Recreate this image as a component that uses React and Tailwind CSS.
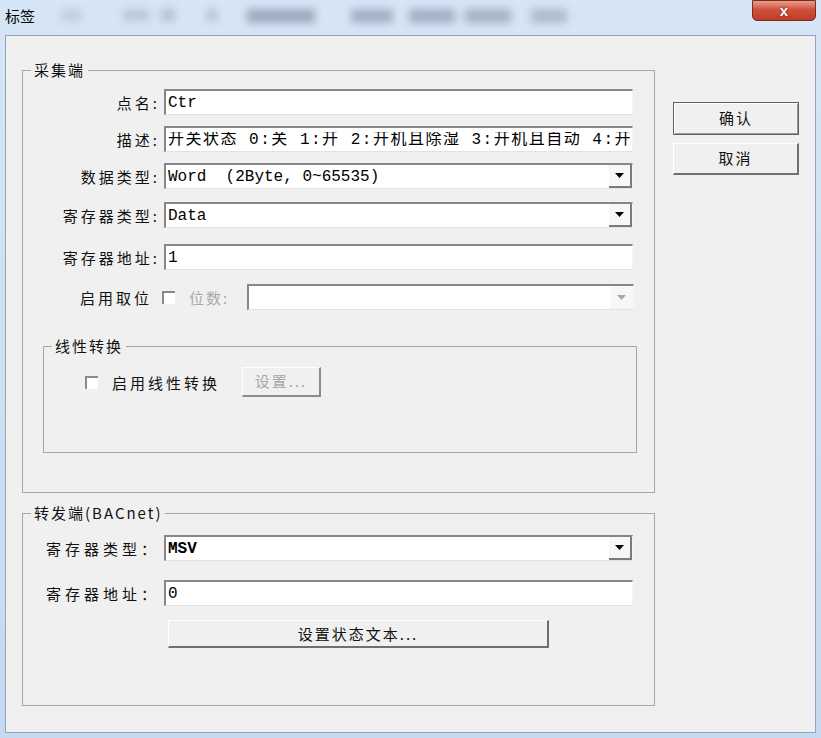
const cjk = "font-['Noto_Sans_CJK_SC','Noto_Sans',sans-serif]";
const mono = "font-['Liberation_Mono','Noto_Sans_CJK_SC',monospace]";

function Arrow({ disabled }) {
  return (
    <svg width="9" height="5" viewBox="0 0 9 5">
      <path d="M0 0h9L4.5 5z" fill={disabled ? "#a8a8a8" : "#000"} />
    </svg>
  );
}

function TextBox({ value, width = "w-[469px]", text = "", combo, disabled }) {
  return (
    <div
      className={`${width} h-[26px] bg-white border-t-2 border-l-2 border-r border-b border-t-[#878787] border-l-[#878787] border-r-[#f4f4f4] border-b-[#e2e2e2] flex items-center overflow-hidden`}
    >
      <span className={`flex-1 pl-[2px] whitespace-pre overflow-hidden text-[16px] leading-none text-black ${mono} ${text}`}>
        {value}
      </span>
      {combo && (
        <div
          className={`h-full w-[23px] shrink-0 flex items-center justify-center bg-[#f7f7f7] ${
            disabled ? "" : "border-r-2 border-b-2 border-r-[#7b7b7b] border-b-[#7b7b7b]"
          }`}
        >
          <Arrow disabled={disabled} />
        </div>
      )}
    </div>
  );
}

function Row({ label, wide, className = "", children }) {
  return (
    <div className={`flex items-center ${className}`}>
      <div
        className={`w-[141px] shrink-0 text-right pr-[4px] text-[15px] leading-none text-[#111] ${cjk} ${
          wide ? "tracking-[4px]" : "tracking-[3px]"
        }`}
      >
        {label}
      </div>
      {children}
    </div>
  );
}

function CheckBox() {
  return (
    <div className="w-[13px] h-[13px] shrink-0 bg-white border-t-2 border-l-2 border-t-[#8a8a8a] border-l-[#8a8a8a]" />
  );
}

function Legend({ children }) {
  return (
    <legend className={`ml-[8px] px-[3px] text-[15px] leading-[18px] tracking-[2px] text-[#111] ${cjk}`}>
      {children}
    </legend>
  );
}

export default function App() {
  return (
    <div className="w-[821px] h-[738px] flex flex-col px-[5px] pb-[5px] bg-[linear-gradient(to_bottom,#d6e6f6,#c6d9ee)] overflow-hidden">
      {/* title bar */}
      <div className="h-[35px] shrink-0 flex items-start">
        <div className={`pt-[7px] text-[15px] leading-[18px] text-black ${cjk}`}>标签</div>
        <div className="flex items-start pt-[9px] ml-[26px] blur-[4px]">
          <div className="w-[20px] h-[12px] bg-[#bfcddf]" />
          <div className="w-[26px] h-[12px] ml-[42px] bg-[#b7c5d8]" />
          <div className="w-[14px] h-[12px] ml-[12px] bg-[#b0bfd2]" />
          <div className="w-[10px] h-[12px] ml-[32px] bg-[#b0bfd2]" />
          <div className="w-[68px] h-[14px] ml-[30px] bg-[#9aa9bf]" />
          <div className="w-[42px] h-[14px] ml-[36px] bg-[#a0aec3]" />
          <div className="w-[46px] h-[14px] ml-[16px] bg-[#a0aec3]" />
          <div className="w-[46px] h-[14px] ml-[10px] bg-[#a4b2c6]" />
          <div className="w-[36px] h-[14px] ml-[20px] bg-[#acbacd]" />
        </div>
        <div className="ml-auto w-[64px] h-[21px] rounded-b-[5px] border border-[#7c2a1e] bg-[linear-gradient(to_bottom,#e8a08c,#d0513a_45%,#c23b26)] flex items-center justify-center">
          <span className="text-[15px] leading-none font-bold text-white font-['Liberation_Sans',sans-serif] [text-shadow:0_0_2px_#5a1a10]">
            x
          </span>
        </div>
      </div>

      {/* client area */}
      <div className="flex-1 flex gap-[18px] bg-[#f0f0f0] border border-[#8ea3bd] pl-[16px] pr-[16px] pt-[25px]">
        <div className="w-[633px] flex flex-col gap-[11px]">
          <fieldset className="h-[432px] border border-[#a7a7a7] pt-[10px]">
            <Legend>采集端</Legend>
            <Row label="点名:">
              <TextBox value="Ctr" />
            </Row>
            <Row label="描述:" className="mt-[11px]">
              <TextBox value="开关状态 0:关 1:开 2:开机且除湿 3:开机且自动 4:开" text="tracking-[1.5px]" />
            </Row>
            <Row label="数据类型:" className="mt-[11px]">
              <TextBox value="Word  (2Byte, 0~65535)" combo />
            </Row>
            <Row label="寄存器类型:" className="mt-[13px]">
              <TextBox value="Data" combo />
            </Row>
            <Row label="寄存器地址:" className="mt-[16px]">
              <TextBox value="1" />
            </Row>
            <div className="mt-[14px] flex items-center pl-[57px]">
              <span className={`text-[15px] leading-none tracking-[3px] text-[#111] ${cjk}`}>启用取位</span>
              <div className="ml-[10px]">
                <CheckBox />
              </div>
              <span className={`ml-[14px] text-[15px] leading-none tracking-[2px] text-[#a9a9a9] ${cjk}`}>位数:</span>
              <div className="ml-[18px]">
                <TextBox value="" width="w-[387px]" combo disabled />
              </div>
            </div>

            <fieldset className="ml-[20px] mt-[27px] w-[594px] h-[116px] border border-[#a7a7a7] pt-[12px]">
              <Legend>线性转换</Legend>
              <div className="flex items-center pl-[41px]">
                <CheckBox />
                <span className={`ml-[14px] text-[15px] leading-none tracking-[3px] text-[#111] ${cjk}`}>
                  启用线性转换
                </span>
                <div
                  className={`ml-[22px] w-[79px] h-[30px] flex items-center justify-center border-t border-l border-r-2 border-b-2 border-t-white border-l-white border-r-[#8c8c8c] border-b-[#8c8c8c] text-[15px] tracking-[2px] text-[#a9a9a9] ${cjk}`}
                >
                  设置...
                </div>
              </div>
            </fieldset>
          </fieldset>

          <fieldset className="h-[202px] border border-[#a7a7a7] pt-[13px]">
            <Legend>转发端(BACnet)</Legend>
            <Row label="寄存器类型：" wide>
              <TextBox value="MSV" combo text="font-bold" />
            </Row>
            <Row label="寄存器地址：" wide className="mt-[19px]">
              <TextBox value="0" />
            </Row>
            <div className="mt-[14px] ml-[145px] w-[381px] h-[28px] flex items-center justify-center border-t border-l border-r-2 border-b-2 border-t-white border-l-white border-r-[#6f6f6f] border-b-[#6f6f6f]">
              <span className={`text-[15px] leading-none tracking-[2px] text-[#111] ${cjk}`}>设置状态文本...</span>
            </div>
          </fieldset>
        </div>

        <div className="w-[126px] flex flex-col pt-[41px] gap-[8px]">
          <div
            className={`h-[33px] flex items-center justify-center border border-[#5f5f5f] shadow-[inset_1px_1px_0_#fff,inset_-1px_-1px_0_#9a9a9a] text-[15px] tracking-[2px] text-[#111] ${cjk}`}
          >
            确认
          </div>
          <div
            className={`h-[32px] flex items-center justify-center border-t border-l border-r-2 border-b-2 border-t-white border-l-white border-r-[#6f6f6f] border-b-[#6f6f6f] text-[15px] tracking-[2px] text-[#111] ${cjk}`}
          >
            取消
          </div>
        </div>
      </div>
    </div>
  );
}
